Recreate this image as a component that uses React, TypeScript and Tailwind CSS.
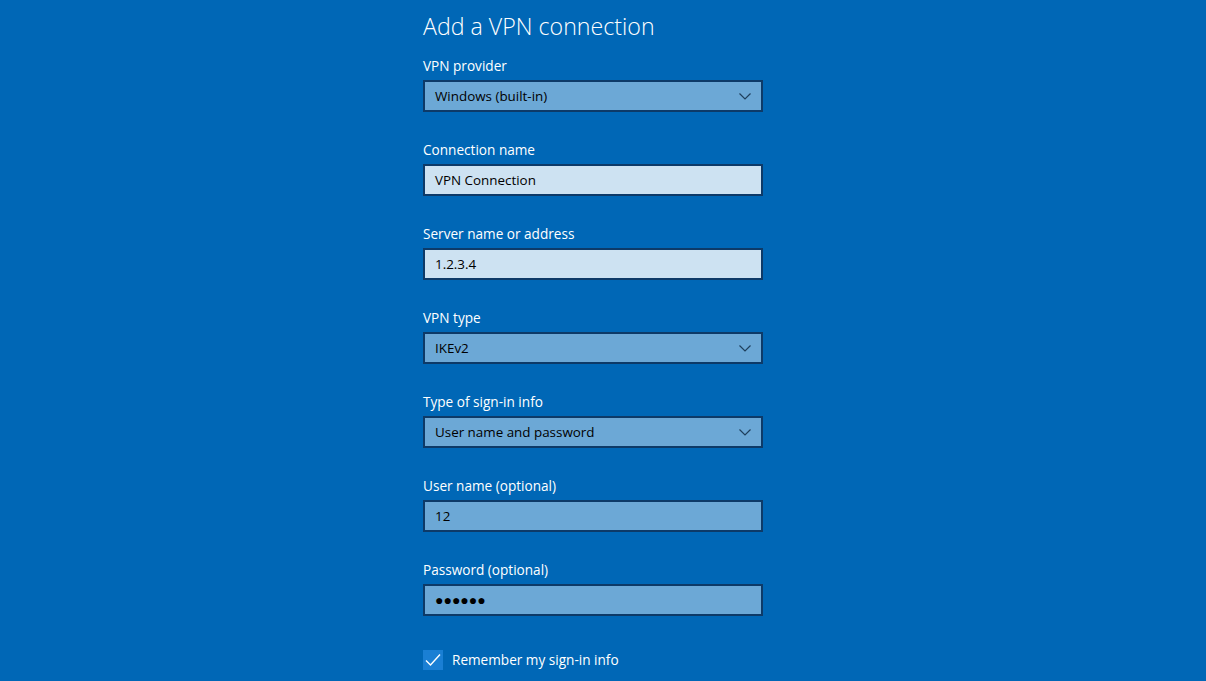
import { useState } from "react";

const Chevron = () => (
  <svg width="12" height="7" viewBox="0 0 12 7" className="shrink-0">
    <path d="M0.5 0.5 L6 6 L11.5 0.5" fill="none" stroke="#1f3f5c" strokeWidth="1.2" />
  </svg>
);

const Field = ({
  label,
  value,
  dropdown,
  light,
  mono,
}: {
  label: string;
  value: string;
  dropdown?: boolean;
  light?: boolean;
  mono?: boolean;
}) => (
  <div className="flex flex-col">
    <label className="text-[13.6px] leading-5 text-white">{label}</label>
    <div
      className={`mt-[4px] h-[32px] w-[340px] border-2 border-[#0d3a68] flex items-center justify-between pl-[10px] pr-[10px] ${
        light ? "bg-[#cde2f2]" : "bg-[#6ca8d6]"
      }`}
    >
      <span
        className={
          mono
            ? "text-[14px] tracking-[0px] text-black leading-none"
            : "text-[13.4px] text-black"
        }
      >
        {value}
      </span>
      {dropdown && <Chevron />}
    </div>
  </div>
);

export default function App() {
  const [remember, setRemember] = useState(true);

  return (
    <div
      className="w-[1206px] h-[681px] overflow-hidden bg-[#0067b6] text-white"
      style={{ fontFamily: '"Open Sans", "Noto Sans", sans-serif' }}
    >
      <div className="ml-[423px] w-[340px] pt-[8px]">
        <h1 className="text-[23.2px] font-light leading-9 text-white">
          Add a VPN connection
        </h1>

        <div className="mt-[12px] flex flex-col gap-[28px]">
          <Field label="VPN provider" value="Windows (built-in)" dropdown />
          <Field label="Connection name" value="VPN Connection" light />
          <Field label="Server name or address" value="1.2.3.4" light />
          <Field label="VPN type" value="IKEv2" dropdown />
          <Field label="Type of sign-in info" value="User name and password" dropdown />
          <Field label="User name (optional)" value="12" />
          <Field label="Password (optional)" value="●●●●●●" mono />
        </div>

        <button
          onClick={() => setRemember(!remember)}
          className="mt-[34px] flex items-center gap-[9px]"
        >
          <span className="w-[20px] h-[20px] bg-[#1a7fd4] flex items-center justify-center">
            {remember && (
              <svg width="16" height="14" viewBox="0 0 16 14">
                <path d="M1 7.5 L5.5 12 L15 1.5" fill="none" stroke="white" strokeWidth="1.4" />
              </svg>
            )}
          </span>
          <span className="text-[13.6px] text-white">Remember my sign-in info</span>
        </button>
      </div>
    </div>
  );
}
